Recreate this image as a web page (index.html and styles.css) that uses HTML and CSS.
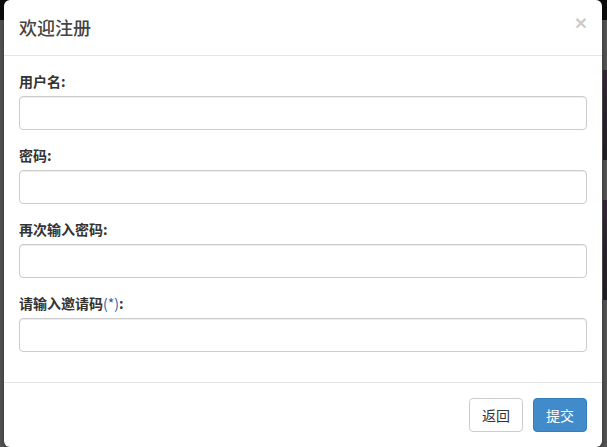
FILE: index.html
```html
<!DOCTYPE html>
<html lang="zh-CN">
<head>
  <meta charset="UTF-8">
  <meta name="viewport" content="width=device-width, initial-scale=1">
  <title>欢迎注册</title>
  <link rel="stylesheet" href="styles.css">
</head>
<body>

  <div class="modal">
    <div class="modal-header">
      <button class="close" type="button">&times;</button>
      <h4 class="modal-title">欢迎注册</h4>
    </div>

    <div class="modal-body">
      <div class="form-group">
        <label>用户名:</label>
        <input type="text" class="form-control">
      </div>
      <div class="form-group">
        <label>密码:</label>
        <input type="password" class="form-control">
      </div>
      <div class="form-group">
        <label>再次输入密码:</label>
        <input type="password" class="form-control">
      </div>
      <div class="form-group">
        <label>请输入邀请码<span class="req">(*)</span>:</label>
        <input type="text" class="form-control">
      </div>
    </div>

    <div class="modal-footer">
      <button class="btn btn-default" type="button">返回</button>
      <button class="btn btn-primary" type="button">提交</button>
    </div>
  </div>

</body>
</html>
```

FILE: styles.css
```css
html, body { margin: 0; height: 100%; }
body {
  font-family: "Noto Sans CJK SC", "Liberation Sans", sans-serif;
  font-size: 14px;
  line-height: 20px;
  color: #333;
  padding-left: 4px;
  box-sizing: border-box;
  overflow: hidden;
  background:
    linear-gradient(#3a2c3c, #24202a) 603px 70px / 4px 90px no-repeat,
    linear-gradient(#3a2c3c, #24202a) 603px 200px / 4px 100px no-repeat,
    linear-gradient(#0d0d0d 0 20px, #5a5a5a 20px);
}

.modal {
  width: 598px;
  background: #fff;
  border-radius: 6px;
  box-shadow: 0 3px 9px rgba(0, 0, 0, .5);
}

.modal-header { padding: 15px; border-bottom: 1px solid #e5e5e5; }
.modal-title { margin: 0; font-size: 18px; font-weight: 500; line-height: 25px; color: #444; }
.close {
  float: right;
  padding: 0;
  margin-top: -3px;
  background: none;
  border: 0;
  font-family: "Liberation Sans", sans-serif;
  font-size: 21px;
  font-weight: bold;
  line-height: 1;
  color: #000;
  opacity: .2;
}

.modal-body { padding: 15px; }
.form-group { margin-bottom: 15px; }
.form-group label { display: block; height: 20px; margin-bottom: 5px; font-weight: bold; }
.req { color: #2f5f9e; font-weight: normal; }
.form-control {
  display: block;
  width: 100%;
  height: 34px;
  box-sizing: border-box;
  padding: 6px 12px;
  font-size: 14px;
  border: 1px solid #ccc;
  border-radius: 4px;
  box-shadow: inset 0 1px 1px rgba(0, 0, 0, .075);
}

.modal-footer {
  padding: 15px;
  border-top: 1px solid #e5e5e5;
  display: flex;
  justify-content: flex-end;
  gap: 10px;
}
.btn {
  height: 34px;
  padding: 6px 12px;
  font-family: inherit;
  font-size: 14px;
  line-height: 20px;
  border: 1px solid transparent;
  border-radius: 4px;
}
.btn-default { background: #fff; border-color: #ccc; color: #333; }
.btn-primary { background: #428bca; border-color: #357ebd; color: #fff; }
```
